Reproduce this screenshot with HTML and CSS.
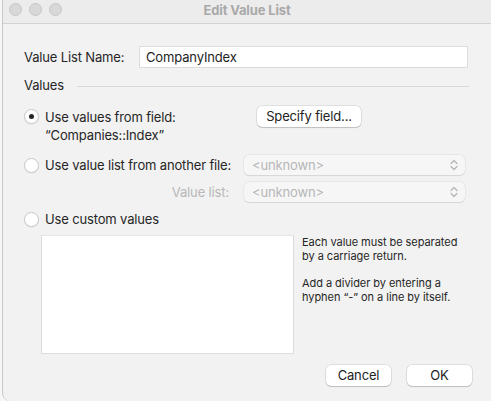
FILE: index.html
```html
<!DOCTYPE html>
<html>
<head>
<meta charset="utf-8">
<link rel="stylesheet" href="styles.css">
</head>
<body>
<div class="window">
  <div class="titlebar">
    <div class="lights"><span class="light"></span><span class="light"></span><span class="light"></span></div>
    <div class="title">Edit Value List</div>
  </div>
  <div class="content">
    <div class="name-row">
      <label class="name-label">Value List Name:</label>
      <div class="text-input">CompanyIndex</div>
    </div>
    <div class="values-head">
      <span>Values</span>
      <span class="rule"></span>
    </div>
    <div class="opt-grid">
      <span class="radio checked"></span>
      <span class="opt-label">Use values from field:</span>
      <div class="ctrl"><button class="btn specify">Specify field...</button></div>

      <span></span>
      <span class="opt-label field-name">“Companies::Index”</span>
      <span></span>

      <span class="radio gap-top"></span>
      <span class="opt-label gap-top">Use value list from another file:</span>
      <div class="popup gap-top"><span>&lt;unknown&gt;</span><svg class="chev" width="8" height="12" viewBox="0 0 8 12"><path d="M1 4.5 L4 1.5 L7 4.5 M1 7.5 L4 10.5 L7 7.5" fill="none" stroke="#b4b4b4" stroke-width="1.2" stroke-linecap="round" stroke-linejoin="round"/></svg></div>

      <span></span>
      <span class="opt-label sub-label">Value list:</span>
      <div class="popup sub-popup"><span>&lt;unknown&gt;</span><svg class="chev" width="8" height="12" viewBox="0 0 8 12"><path d="M1 4.5 L4 1.5 L7 4.5 M1 7.5 L4 10.5 L7 7.5" fill="none" stroke="#b4b4b4" stroke-width="1.2" stroke-linecap="round" stroke-linejoin="round"/></svg></div>

      <span class="radio custom-top"></span>
      <span class="opt-label custom-top">Use custom values</span>
      <span></span>
    </div>
    <div class="custom-area">
      <div class="textarea"></div>
      <div class="help">
        <p>Each value must be separated by a carriage return.</p>
        <p>Add a divider by entering a hyphen “-” on a line by itself.</p>
      </div>
    </div>
    <div class="actions">
      <button class="btn act">Cancel</button>
      <button class="btn act">OK</button>
    </div>
  </div>
</div>
</body>
</html>
```

FILE: styles.css
```css
* { box-sizing: border-box; }
html, body { margin: 0; padding: 0; background: #f7f7f7; }
body {
  font-family: Inter, "Noto Sans", "Liberation Sans", sans-serif;
  font-size: 13px;
  letter-spacing: -0.15px;
  color: #262626;
}
.window {
  margin-left: 2px;
  width: 489px;
  height: 401px;
  background: #f2f2f2;
  border-left: 1px solid #c9c9c9;
  border-bottom-left-radius: 8px;
  overflow: hidden;
}
.titlebar {
  height: 24px;
  background: #ececec;
  border-bottom: 1px solid #d3d3d3;
  position: relative;
}
.lights {
  display: flex;
  gap: 7px;
  padding: 3px 0 0 6px;
}
.light {
  width: 13px;
  height: 13px;
  border-radius: 50%;
  background: #d8d8d8;
  border: 1px solid #c6c6c6;
}
.title {
  position: absolute;
  left: 0; right: 0; top: 2px;
  text-align: center;
  font-weight: 700;
  font-size: 13px;
  color: #a9a9a9;
  line-height: 16px;
}
.content {
  padding: 22px 19px 0 21px;
}
.name-row {
  display: flex;
  align-items: center;
  height: 22px;
  padding-right: 4px;
}
.name-label { width: 115px; }
.text-input {
  flex: 1;
  height: 22px;
  background: #fff;
  border: 1px solid #dcdcdc;
  padding: 0 6px;
  line-height: 20px;
  color: #1e1e1e;
}
.values-head {
  display: flex;
  align-items: center;
  height: 16px;
  margin-top: 9px;
  padding-right: 3px;
}
.rule {
  flex: 1;
  height: 1px;
  background: #d6d6d6;
  margin-left: 13px;
  margin-top: 3px;
}
.opt-grid {
  display: grid;
  grid-template-columns: 21px 199px 221px;
  grid-auto-rows: auto;
  align-items: center;
  margin-top: 13px;
}
.radio {
  width: 15px;
  height: 15px;
  border-radius: 50%;
  background: #fff;
  border: 1px solid #c9c9c9;
  box-shadow: 0 0.5px 1px rgba(0,0,0,0.08);
  position: relative;
}
.radio.checked::after {
  content: "";
  position: absolute;
  left: 4px; top: 4px;
  width: 5px; height: 5px;
  border-radius: 50%;
  background: #262626;
}
.opt-label { line-height: 16px; white-space: nowrap; }
.field-name { line-height: 16px; }
.ctrl { height: 21px; }
.btn {
  font-family: inherit;
  font-size: 13px;
  letter-spacing: -0.15px;
  color: #232323;
  background: #fff;
  border: none;
  border-radius: 5px;
  box-shadow: 0 0 0 0.5px rgba(0,0,0,0.16), 0 1px 1px rgba(0,0,0,0.14);
  height: 21px;
  padding: 0;
  line-height: 21px;
}
.specify { margin-left: 13px; width: 104px; }
.gap-top { margin-top: 12px; }
.popup {
  height: 20px;
  background: #f6f6f6;
  border-radius: 5px;
  box-shadow: 0 0 0 0.5px rgba(0,0,0,0.07), 0 0.5px 1px rgba(0,0,0,0.08);
  display: flex;
  align-items: center;
  justify-content: space-between;
  padding: 0 7px 0 8px;
  color: #b6b6b6;
}
.sub-popup { margin-top: 7px; }
.sub-label {
  margin-top: 7px;
  text-align: right;
  padding-right: 15px;
  color: #b8b8b8;
}
.custom-top { margin-top: 9px; }
.custom-area {
  display: flex;
  margin-top: 8px;
  padding-left: 17px;
}
.textarea {
  width: 253px;
  height: 119px;
  background: #fff;
  border: 1px solid #dcdcdc;
  border-top-color: #e6e6e6;
}
.help {
  margin-left: 8px;
  font-size: 11px;
  letter-spacing: -0.05px;
  line-height: 14px;
  width: 162px;
  color: #262626;
}
.help p { margin: 0 0 13px 0; }
.actions {
  display: flex;
  justify-content: flex-end;
  gap: 16px;
  margin-top: 11px;
}
.act { width: 65px; }
```
